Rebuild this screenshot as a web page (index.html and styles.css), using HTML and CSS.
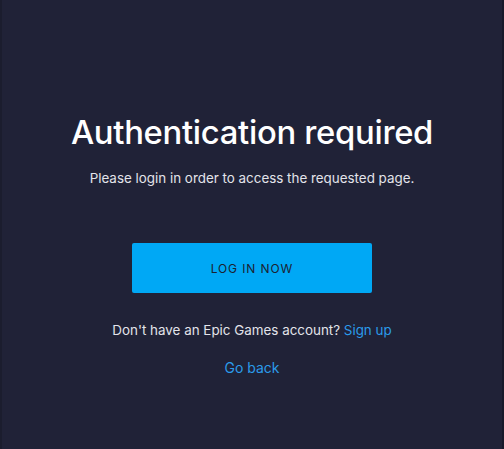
FILE: index.html
```html
<!DOCTYPE html>
<html lang="en">
<head>
<meta charset="utf-8">
<title>Authentication required</title>
<link rel="stylesheet" href="styles.css">
</head>
<body>
<main class="page">
  <section class="auth">
    <h1 class="auth-title">Authentication required</h1>
    <p class="auth-text">Please login in order to access the requested page.</p>
    <a class="auth-button" href="#">LOG IN NOW</a>
    <p class="auth-signup">Don't have an Epic Games account? <a class="link" href="#">Sign up</a></p>
    <a class="link back" href="#">Go back</a>
  </section>
</main>
</body>
</html>
```
FILE: styles.css
```css
html, body {
  margin: 0;
  padding: 0;
  height: 100%;
}
body {
  background: #202237;
  font-family: Inter, "Noto Sans", sans-serif;
  color: #ffffff;
}
.page {
  box-sizing: border-box;
  height: 100%;
  border-left: 2px solid #1b1d2e;
  border-right: 2px solid #17192a;
  display: flex;
  justify-content: center;
}
.auth {
  padding-top: 110px;
  display: flex;
  flex-direction: column;
  align-items: center;
  text-align: center;
}
.auth-title {
  margin: 0;
  font-size: 32.8px;
  font-weight: 500;
  line-height: 44px;
  letter-spacing: -0.3px;
}
.auth-text {
  margin: 14px 0 0;
  font-size: 13.4px;
  line-height: 20px;
  color: #e3e4ea;
}
.auth-button {
  margin-top: 55px;
  width: 240px;
  height: 50px;
  display: flex;
  align-items: center;
  justify-content: center;
  background: #00a8f5;
  color: #1c2230;
  font-size: 12px;
  letter-spacing: 0.9px;
  text-decoration: none;
  border-radius: 2px;
}
.auth-signup {
  margin: 27px 0 0;
  font-size: 13.4px;
  line-height: 20px;
  color: #e3e4ea;
}
.link {
  color: #2b9bea;
  text-decoration: none;
}
.back {
  margin-top: 18px;
  font-size: 14px;
  line-height: 20px;
}
```
